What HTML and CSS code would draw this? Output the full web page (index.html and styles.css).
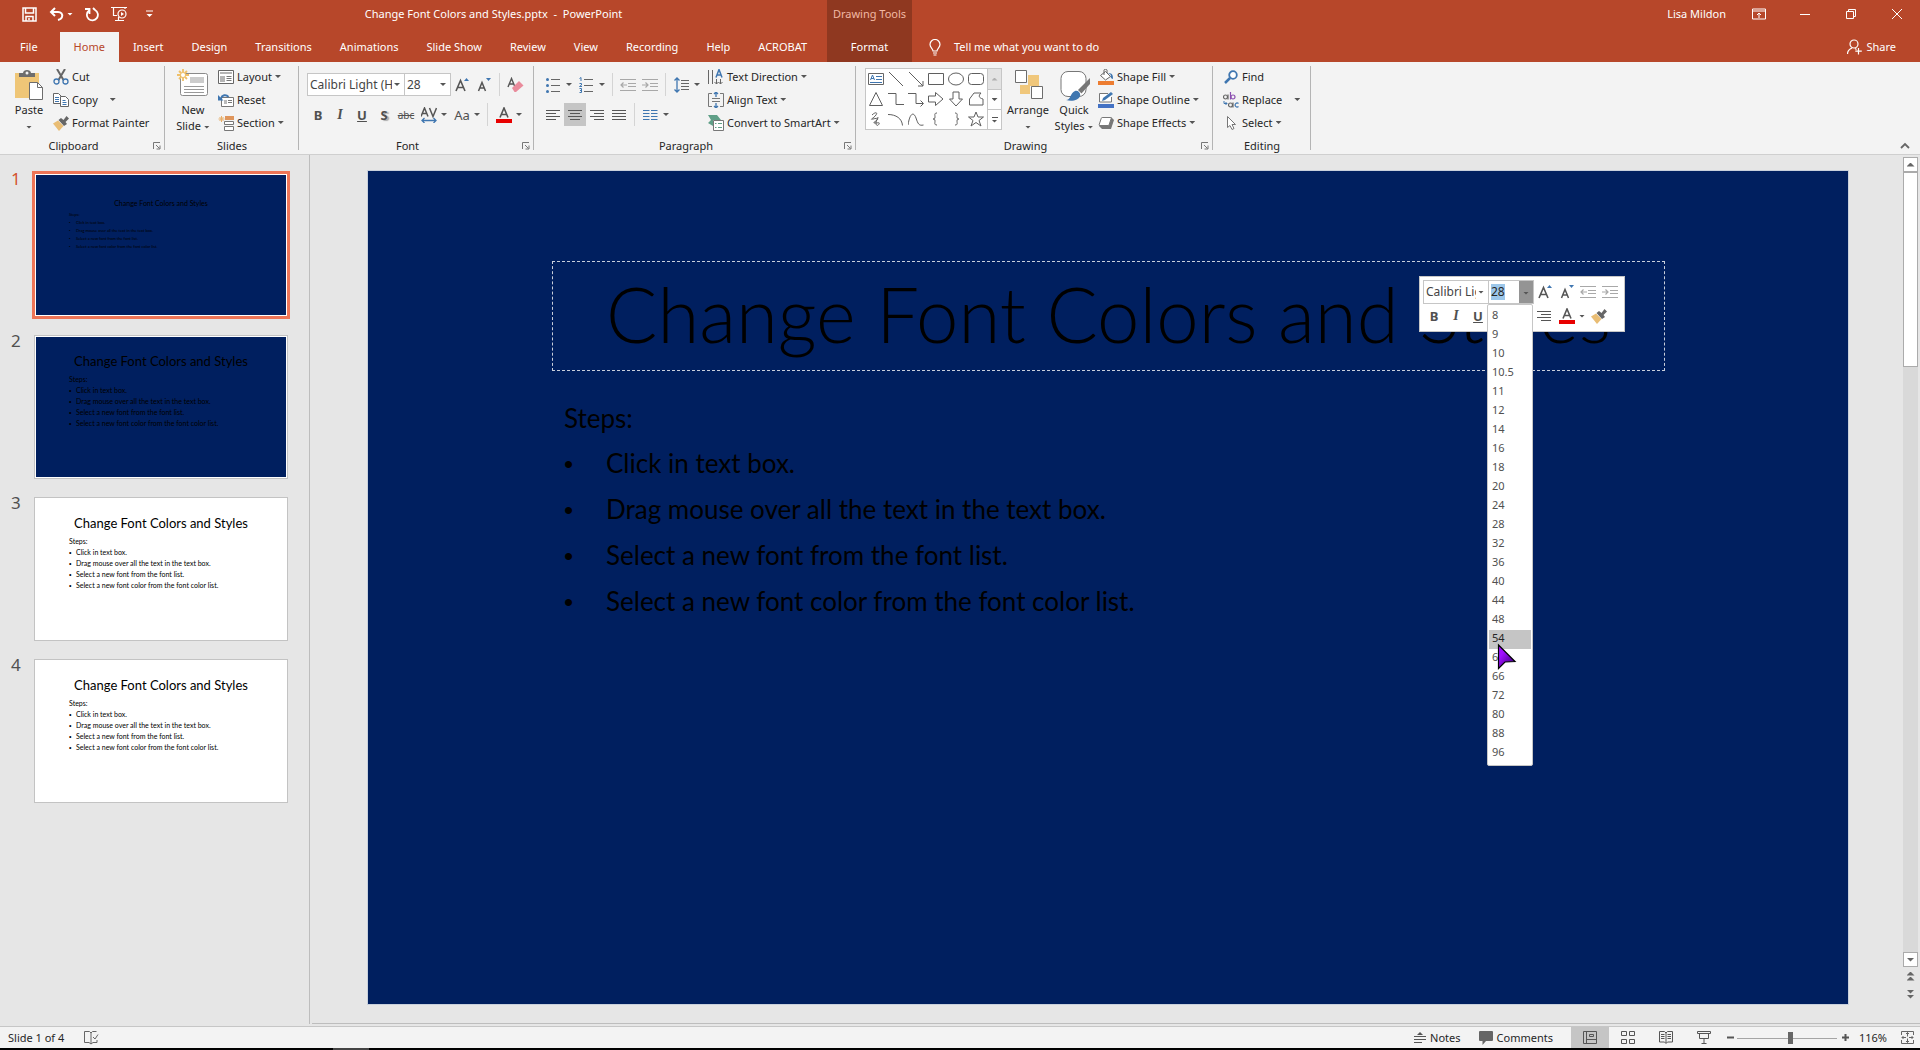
FILE: index.html
```html
<!DOCTYPE html>
<html lang="en">
<head>
<meta charset="utf-8">
<title>Change Font Colors and Styles.pptx - PowerPoint</title>
<link rel="stylesheet" href="styles.css">
</head>
<body>
<svg class="defs" aria-hidden="true">
  <symbol id="grow" viewBox="0 0 16 16"><path d="M2 14L6.500 3.500L11 14M3.700 10.500H9.300" fill="none" stroke="#555" stroke-width="1.600"/><path d="M10 4l2.500-3L15 4z" fill="#3f76b0"/></symbol>
  <symbol id="shrink" viewBox="0 0 16 16"><path d="M2.500 14L6 5.500L9.500 14M3.800 11H8.200" fill="none" stroke="#555" stroke-width="1.500"/><path d="M10 1l2.500 3L15 1z" fill="#3f76b0"/></symbol>
  <symbol id="outdent" viewBox="0 0 16 16"><path d="M0 2.500h16M8 6.500h8M8 9.500h8M0 13.500h16M1 8h6M3.500 5.500L1 8l2.500 2.500" fill="none" stroke="#a8a8a8" stroke-width="1.200"/></symbol>
  <symbol id="indent" viewBox="0 0 16 16"><path d="M0 2.500h16M8 6.500h8M8 9.500h8M0 13.500h16M0 8h6M3.500 5.500L6 8l-2.500 2.500" fill="none" stroke="#a8a8a8" stroke-width="1.200"/></symbol>
  <symbol id="alignright" viewBox="0 0 16 16"><path d="M1 3.500h14M5 6.500h10M1 9.500h14M5 12.500h10" stroke="#555"/></symbol>
  <symbol id="fontcolor" viewBox="0 0 16 16"><path d="M4 10.500L8 1L12 10.500M5.500 7.500h5" fill="none" stroke="#555" stroke-width="1.600"/><path d="M0 12h16v4H0z" fill="#e80000"/></symbol>
  <symbol id="painter" viewBox="0 0 16 16"><path d="M0 8.500l5-3 5.500 5.500L6 16z" fill="#e9bd74"/><path d="M5.500 5L8 3l2.500 2 3-4L16 3.500l-3.500 3.500L14 9l-3 2z" fill="#666"/></symbol>
  <symbol id="launcher" viewBox="0 0 8 8"><path d="M.5 7V.5H7M3 3l3.500 3.500M7 3.500V7H3.500" fill="none" stroke="#777"/></symbol>
</svg>

<header class="titlebar">
  <div class="bar-left">
    <div class="qat">
      <button aria-label="Save"><svg width="15" height="15" viewBox="0 0 15 15"><path d="M1 1h13v13H1zM3.500 1v5h8V1M4 14V9.500h7V14M6 12h2" fill="none" stroke="#fff" stroke-width="1.500"/></svg></button>
      <button aria-label="Undo"><svg width="15" height="14" viewBox="0 0 15 14"><path d="M6 1L2 5l4 4M2 5h7c3 0 5 2 4 5-.5 1.500-2 2.500-4 3" fill="none" stroke="#fff" stroke-width="2"/></svg><span class="caret"></span></button>
      <button aria-label="Redo"><svg width="14" height="15" viewBox="0 0 14 15"><path d="M4 3.500A5.500 5.500 0 1 0 10 3M4.500 7V2H0M10 3L8 1" fill="none" stroke="#fff" stroke-width="1.800"/></svg></button>
      <button aria-label="Start from beginning"><svg width="17" height="16" viewBox="0 0 17 16"><path d="M0 1.500h16M2.500 2v7.500H6M14 2v1M4 14.500h9M7.500 11v3" fill="none" stroke="#fff" stroke-width="1.200"/><circle cx="11" cy="8" r="4" fill="none" stroke="#fff" stroke-width="1.200"/><path d="M10 6v4l3-2z" fill="#fff"/></svg></button>
      <button class="qat-more" aria-label="Customize Quick Access Toolbar"><svg width="7" height="8" viewBox="0 0 7 8"><path d="M0 1h7" stroke="#fff"/><path d="M.5 4h6l-3 3z" fill="#fff"/></svg></button>
    </div>
    <h1 class="doc-title">Change Font Colors and Styles.pptx&nbsp; -&nbsp; PowerPoint</h1>
  </div>
  <nav class="tabs" aria-label="Ribbon tabs">
    <button class="tab tab-file">File</button>
    <button class="tab tab-active">Home</button>
    <button class="tab">Insert</button>
    <button class="tab">Design</button>
    <button class="tab">Transitions</button>
    <button class="tab">Animations</button>
    <button class="tab">Slide Show</button>
    <button class="tab">Review</button>
    <button class="tab">View</button>
    <button class="tab">Recording</button>
    <button class="tab">Help</button>
    <button class="tab">ACROBAT</button>
  </nav>
  <div class="context">
    <span class="context-name">Drawing Tools</span>
    <button class="tab">Format</button>
  </div>
  <div class="window-controls">
    <span class="user">Lisa Mildon</span>
    <button aria-label="Ribbon display options"><svg width="14" height="12" viewBox="0 0 14 12"><path d="M.5 1h13v10H.5zM.5 3h13M7 10V5M5 7l2-2 2 2" fill="none" stroke="#fff"/></svg></button>
    <button aria-label="Minimize"><svg width="10" height="10" viewBox="0 0 10 10"><path d="M0 5.500h10" stroke="#fff"/></svg></button>
    <button aria-label="Restore"><svg width="10" height="10" viewBox="0 0 10 10"><path d="M.5 2.500h7v7h-7zM2.500 2.500v-2h7v7h-2" fill="none" stroke="#fff"/></svg></button>
    <button aria-label="Close"><svg width="10" height="10" viewBox="0 0 10 10"><path d="M0 0l10 10M10 0L0 10" stroke="#fff"/></svg></button>
  </div>
  <div class="tell-row">
    <button class="tell"><svg width="12" height="17" viewBox="0 0 12 17"><path d="M4 12c0-2-3-3.500-3-6.500a5 5 0 0 1 10 0c0 3-3 4.500-3 6.500zM4 14h4M4.500 16h3" fill="none" stroke="#fff" stroke-width="1.200"/></svg>Tell me what you want to do</button>
    <button class="share"><svg width="15" height="16" viewBox="0 0 15 16"><circle cx="7" cy="5" r="4" fill="none" stroke="#fff" stroke-width="1.200"/><path d="M.5 15c0-3 2-5 4.500-6M11.500 9v6.500M8.300 12.200h6.500M8 9.500l1.500 1" fill="none" stroke="#fff" stroke-width="1.200"/></svg>Share</button>
  </div>
</header>

<section class="ribbon" aria-label="Home ribbon">
  <section class="group group-clipboard">
    <div class="group-body">
      <button class="big"><svg width="32" height="32" viewBox="0 0 32 32"><path d="M2 4h24v25H2z" fill="#efc677"/><path d="M6 8V4h4c0-4 8-4 8 0h4v4z" fill="#6d6d6d"/><circle cx="14" cy="4" r="1.500" fill="#f3f3f3"/><path d="M16.500 13.500h8l5 5v12h-13z" fill="#fff" stroke="#6d6d6d"/><path d="M24.500 13.500v5h5" fill="none" stroke="#6d6d6d"/></svg><span>Paste</span><span><i class="caret"></i></span></button>
      <div class="stack">
        <button class="cmd"><svg width="16" height="16" viewBox="0 0 16 16"><path d="M4 0l6.500 11M12 0L5.500 11" stroke="#666" stroke-width="2"/><circle cx="3.500" cy="12.500" r="2.500" fill="none" stroke="#3f76b0" stroke-width="1.300"/><circle cx="12.500" cy="12.500" r="2.500" fill="none" stroke="#3f76b0" stroke-width="1.300"/></svg>Cut</button>
        <button class="cmd cmd-split"><svg width="16" height="16" viewBox="0 0 16 16"><path d="M.5 1.500h5l3 3v7h-8z" fill="#fff" stroke="#666"/><path d="M7.500 4.500h5l3 3v7h-8z" fill="#fff" stroke="#666"/><path d="M2 5.500h4M2 7.500h4M2 9.500h4M9.500 8.500h3M9.500 10.500h4M9.500 12.500h4" stroke="#3f76b0"/></svg>Copy<span class="caret"></span></button>
        <button class="cmd"><svg width="16" height="16"><use href="#painter"/></svg>Format Painter</button>
      </div>
    </div>
    <footer><h2>Clipboard</h2><button aria-label="Clipboard options"><svg width="8" height="8"><use href="#launcher"/></svg></button></footer>
  </section>

  <section class="group group-slides">
    <div class="group-body">
      <button class="big"><svg width="32" height="32" viewBox="0 0 32 32"><rect x="3.500" y="4.500" width="27" height="22" rx="2" fill="#fff" stroke="#8a8a8a"/><path d="M13 8h14v6H13z" fill="#ccc"/><path d="M7 17.500h20M7 20.500h20M7 23.500h20" stroke="#999"/><path d="M6 0v12M0 6h12M2 2l8 8M10 2l-8 8" stroke="#efc06a" stroke-width="1.800"/><circle cx="6" cy="6" r="2" fill="#fff"/></svg><span>New</span><span>Slide <i class="caret"></i></span></button>
      <div class="stack">
        <button class="cmd"><svg width="16" height="16" viewBox="0 0 16 16"><path d="M.5 1.500h15v13H.5z" fill="#fff" stroke="#666"/><path d="M2 3h12v2H2zM2 7h5v6H2z" fill="#b5b5b5"/><path d="M8.500 7.500h5M8.500 9.500h5M8.500 11.500h5" stroke="#777"/></svg>Layout<span class="caret"></span></button>
        <button class="cmd"><svg width="16" height="16" viewBox="0 0 16 16"><path d="M3.500 5.500h12v9h-12z" fill="#fff" stroke="#777"/><path d="M6 8h3v4H6z" fill="#bbb"/><path d="M10 8.500h4M10 10.500h4" stroke="#777"/><path d="M3 6.500C4 3 8 2 10.500 5" fill="none" stroke="#3f76b0" stroke-width="2"/><path d="M0 3v5.500h5.500z" fill="#3f76b0"/></svg>Reset</button>
        <button class="cmd"><svg width="16" height="16" viewBox="0 0 16 16"><path d="M7 2h9M7 4h9" stroke="#d9772a" stroke-width="1.500"/><path d="M6.500 6.500h9v3h-9zM6.500 11.500h9v4h-9z" fill="#fff" stroke="#777"/><path d="M3.500 1v6M.5 4h6M1.500 2l4 4M5.500 2l-4 4" stroke="#e8b06a"/></svg>Section<span class="caret"></span></button>
      </div>
    </div>
    <footer><h2>Slides</h2></footer>
  </section>

  <section class="group group-font">
    <div class="group-body rows">
      <div class="row">
        <span class="combo combo-font"><select aria-label="Font"><option>Calibri Light (Headings)</option></select><i class="caret"></i></span>
        <span class="combo combo-size"><select aria-label="Font size"><option>28</option></select><i class="caret"></i></span>
        <button class="tool" aria-label="Increase font size"><svg width="16" height="16"><use href="#grow"/></svg></button>
        <button class="tool" aria-label="Decrease font size"><svg width="16" height="16"><use href="#shrink"/></svg></button>
        <i class="sep"></i>
        <button class="tool" aria-label="Clear formatting"><svg width="17" height="16" viewBox="0 0 17 16"><path d="M1 10L4.500 1.500L8 10M2.300 7h4.400" fill="none" stroke="#555" stroke-width="1.400"/><path d="M5 11l7-7 4.500 4.500L9 15H7.500z" fill="#e98b9b"/></svg></button>
      </div>
      <div class="row">
        <button class="tool glyph"><b>B</b></button>
        <button class="tool glyph"><em>I</em></button>
        <button class="tool glyph"><u>U</u></button>
        <button class="tool glyph"><b class="shadow">S</b></button>
        <button class="tool glyph glyph-small"><s>abc</s></button>
        <button class="split" aria-label="Character spacing"><svg width="16" height="16" viewBox="0 0 16 16"><path d="M0 9.500L3.500 1L7 9.500M1.300 6.500h4.400M8.500 1L12 9.500L15.500 1" fill="none" stroke="#555" stroke-width="1.500"/><path d="M1 13.500h14M3.500 11L1 13.500L3.500 16M12.500 11l2.500 2.500L12.500 16" fill="none" stroke="#3f76b0" stroke-width="1.300"/></svg><span class="caret"></span></button>
        <button class="split glyph"><span class="case">Aa</span><span class="caret"></span></button>
        <i class="sep"></i>
        <button class="split" aria-label="Font color"><svg width="16" height="16"><use href="#fontcolor"/></svg><span class="caret"></span></button>
      </div>
    </div>
    <footer><h2>Font</h2><button aria-label="Font options"><svg width="8" height="8"><use href="#launcher"/></svg></button></footer>
  </section>

  <section class="group group-paragraph">
    <div class="group-body">
      <div class="rows">
        <div class="row">
          <button class="split" aria-label="Bullets"><svg width="16" height="16" viewBox="0 0 16 16"><circle cx="1.500" cy="2.500" r="1.500" fill="#3f76b0"/><circle cx="1.500" cy="8.500" r="1.500" fill="#3f76b0"/><circle cx="1.500" cy="14.500" r="1.500" fill="#3f76b0"/><path d="M5 2.500h9M5 8.500h9M5 14.500h9" stroke="#666"/></svg><span class="caret"></span></button>
          <button class="split" aria-label="Numbering"><svg width="16" height="16" viewBox="0 0 16 16"><path d="M.5 1.500L2 .5V4M.5 6.500h2v1.500L.5 9.500h2.500M.5 11.500h2v4H.5M1 13.500h1.500" fill="none" stroke="#3f76b0"/><path d="M5 2.500h9M5 8.500h9M5 14.500h9" stroke="#666"/></svg><span class="caret"></span></button>
          <i class="sep"></i>
          <button class="tool" aria-label="Decrease list level"><svg width="16" height="16"><use href="#outdent"/></svg></button>
          <button class="tool" aria-label="Increase list level"><svg width="16" height="16"><use href="#indent"/></svg></button>
          <i class="sep"></i>
          <button class="split" aria-label="Line spacing"><svg width="16" height="16" viewBox="0 0 16 16"><path d="M3 1v14M.5 3.500L3 1l2.500 2.500M.5 12.500L3 15l2.500-2.500" fill="none" stroke="#3f76b0" stroke-width="1.300"/><path d="M7 3.500h8M7 6.500h8M7 9.500h8M7 12.500h8" stroke="#666"/></svg><span class="caret"></span></button>
        </div>
        <div class="row">
          <button class="tool" aria-label="Align left"><svg width="16" height="16" viewBox="0 0 16 16"><path d="M1 3.500h14M1 6.500h10M1 9.500h14M1 12.500h10" stroke="#555"/></svg></button>
          <button class="tool tool-on" aria-label="Center"><svg width="16" height="16" viewBox="0 0 16 16"><path d="M1 3.500h14M3 6.500h10M1 9.500h14M3 12.500h10" stroke="#555"/></svg></button>
          <button class="tool" aria-label="Align right"><svg width="16" height="16"><use href="#alignright"/></svg></button>
          <button class="tool" aria-label="Justify"><svg width="16" height="16" viewBox="0 0 16 16"><path d="M1 3.500h14M1 6.500h14M1 9.500h14M1 12.500h14" stroke="#555"/></svg></button>
          <i class="sep"></i>
          <button class="split" aria-label="Columns"><svg width="16" height="16" viewBox="0 0 16 16"><path d="M0 3.500h6.500M0 6.500h6.500M0 9.500h6.500M0 12.500h6.500M8 3.500h6.500M8 6.500h6.500M8 9.500h6.500M8 12.500h6.500" stroke="#3f76b0"/></svg><span class="caret"></span></button>
        </div>
      </div>
      <div class="stack">
        <button class="cmd"><svg width="16" height="16" viewBox="0 0 16 16"><path d="M.5 1v14M4.500 1v14M8.500 10v5M12.500 10v5" stroke="#666"/><path d="M8 8.500L11 .5L14 8.500M9 6h4" fill="none" stroke="#3f76b0" stroke-width="1.500"/><path d="M6.500 13l2 2 2-2M10.500 13l2 2 2-2" fill="none" stroke="#666"/></svg>Text Direction<span class="caret"></span></button>
        <button class="cmd"><svg width="16" height="16" viewBox="0 0 16 16"><path d="M4 1.500H.5v13H4M12 1.500h3.500v13H12M4 6.500h8M4 9.500h8" fill="none" stroke="#777"/><path d="M8 0v5M6 2l2-2 2 2M8 11v5M6 14l2 2 2-2" fill="none" stroke="#3f76b0" stroke-width="1.300"/></svg>Align Text<span class="caret"></span></button>
        <button class="cmd"><svg width="16" height="16" viewBox="0 0 16 16"><path d="M0 0h9l4 5H5v6L0 8l3-3z" fill="#5f9f87"/><path d="M5.500 5.500h10v10h-10z" fill="#fff" stroke="#777"/><path d="M7 8.500h1.500M10 8.500h4M7 12.500h1.500M10 12.500h4" stroke="#5f9f87"/></svg>Convert to SmartArt<span class="caret"></span></button>
      </div>
    </div>
    <footer><h2>Paragraph</h2><button aria-label="Paragraph options"><svg width="8" height="8"><use href="#launcher"/></svg></button></footer>
  </section>

  <section class="group group-drawing">
    <div class="group-body">
      <div class="gallery">
        <div class="shapes">
          <button aria-label="Text box"><svg width="16" height="16" viewBox="0 0 16 16"><path d="M.5 2.500h15v11H.5z" fill="#fff" stroke="#666"/><path d="M2.500 9L4.500 4L6.500 9M3 7.500h3M8 5.500h6M8 8.500h6M2 11.500h12" fill="none" stroke="#3f76b0"/></svg></button>
          <button aria-label="Line"><svg class="s" width="16" height="16" viewBox="0 0 16 16"><path d="M1 1l14 14"/></svg></button>
          <button aria-label="Arrow"><svg class="s" width="16" height="16" viewBox="0 0 16 16"><path d="M1 1l14 14M15 10v5h-5"/></svg></button>
          <button aria-label="Rectangle"><svg class="s" width="16" height="16" viewBox="0 0 16 16"><path d="M.5 2.500h15v11H.5z"/></svg></button>
          <button aria-label="Oval"><svg class="s" width="16" height="16" viewBox="0 0 16 16"><ellipse cx="8" cy="8" rx="7.500" ry="6"/></svg></button>
          <button aria-label="Rounded rectangle"><svg class="s" width="16" height="16" viewBox="0 0 16 16"><rect x=".5" y="2.500" width="15" height="11" rx="3"/></svg></button>
          <button aria-label="Triangle"><svg class="s" width="16" height="16" viewBox="0 0 16 16"><path d="M8 1.500l6.500 13h-13z"/></svg></button>
          <button aria-label="Elbow connector"><svg class="s" width="16" height="16" viewBox="0 0 16 16"><path d="M0 2.500h8v11h8"/></svg></button>
          <button aria-label="Elbow arrow"><svg class="s" width="16" height="16" viewBox="0 0 16 16"><path d="M0 2.500h8v10h7M12.500 9.500l3 3-3 3"/></svg></button>
          <button aria-label="Right arrow"><svg class="s" width="16" height="16" viewBox="0 0 16 16"><path d="M.5 5h7V1.500L15 8l-7.500 6.500V11h-7z"/></svg></button>
          <button aria-label="Down arrow"><svg class="s" width="16" height="16" viewBox="0 0 16 16"><path d="M5 1v7H1.500L8 15l6.500-7H11V1z"/></svg></button>
          <button aria-label="Freeform"><svg class="s" width="16" height="16" viewBox="0 0 16 16"><path d="M1.500 14V8L6 2h7c-3 3-2 5 2 6v6z"/></svg></button>
          <button aria-label="Scribble"><svg class="s" width="16" height="16" viewBox="0 0 16 16"><path d="M4 4c3-3 6-3 4 0s-7 5-3 4 6-1 4 1-5 3-2 3 5-1 4 1-3 2-3-1 2-4 2-6"/></svg></button>
          <button aria-label="Arc"><svg class="s" width="16" height="16" viewBox="0 0 16 16"><path d="M0 3.500c8 0 14 4 14.500 11"/></svg></button>
          <button aria-label="Curve"><svg class="s" width="16" height="16" viewBox="0 0 16 16"><path d="M0 14C2 1 6 1 8 7s3 8 7.500 7"/></svg></button>
          <button aria-label="Left brace"><svg class="s" width="16" height="16" viewBox="0 0 16 16"><path d="M9 2C6 2 7 4 7 6S6 8 5 8c1 0 2 0 2 2s-1 4 2 4"/></svg></button>
          <button aria-label="Right brace"><svg class="s" width="16" height="16" viewBox="0 0 16 16"><path d="M7 2c3 0 2 2 2 4s1 2 2 2c-1 0-2 0-2 2s1 4-2 4"/></svg></button>
          <button aria-label="Star"><svg class="s" width="16" height="16" viewBox="0 0 16 16"><path d="M8 1l2 5h5.500L11 9.500l2 5.500-5-3.500L3 15l2-5.500L.5 6H6z"/></svg></button>
        </div>
        <div class="gallery-scroll">
          <button disabled aria-label="Scroll up"><i class="caret caret-up"></i></button>
          <button aria-label="Scroll down"><i class="caret"></i></button>
          <button aria-label="More shapes"><i class="bar"></i><i class="caret"></i></button>
        </div>
      </div>
      <button class="big big-arrange"><svg width="32" height="32" viewBox="0 0 32 32"><path d="M16 6h11v11H16zM8 16h10v9H8z" fill="#f0c77b"/><path d="M3.500 1.500h11v12h-11zM19.500 17.500h11v12h-11z" fill="#fff" stroke="#6d6d6d"/></svg><span>Arrange</span><span><i class="caret"></i></span></button>
      <button class="big big-styles"><svg width="32" height="32" viewBox="0 0 32 32"><rect x="3" y="2.500" width="25" height="25" rx="7" fill="#fff" stroke="#777"/><path d="M32 9L20 21l3.500 3.500L32 15z" fill="#777"/><path d="M8 31c5 0 4-7 9-9 3-1 6 2 5 5-1 4-8 6-14 4z" fill="#3f76b0"/></svg><span>Quick</span><span>Styles <i class="caret"></i></span></button>
      <div class="stack">
        <button class="cmd"><svg width="16" height="16" viewBox="0 0 16 16"><path d="M2.500 6.500l5-4 5 5-5 3.500z" fill="#fff" stroke="#666"/><path d="M6 6V1c0-1 3-1 3 0v3" fill="none" stroke="#666"/><path d="M10 4c5 0 5 3 5 6-2 0-3-3-2-4z" fill="#3f76b0"/><path d="M0 12h16v4H0z" fill="#ed7d31"/></svg>Shape Fill<span class="caret"></span></button>
        <button class="cmd"><svg width="16" height="16" viewBox="0 0 16 16"><path d="M13.500 5v5H1.500V1.500H10" fill="#fff" stroke="#777"/><path d="M4 9l1-3L13 0l2 2-8 6z" fill="#3f76b0"/><path d="M0 12h16v4H0z" fill="#4472c4"/></svg>Shape Outline<span class="caret"></span></button>
        <button class="cmd"><svg width="16" height="16" viewBox="0 0 16 16"><path d="M4 2h9l3 3-3 9H4l-3-3z" fill="#777"/><path d="M4.500 2.500h8q1 0 .7 1l-2 6q-.3 1-1.200 1H2q-1 0-.8-1l2-6q.3-1 1.300-1z" fill="#fff" stroke="#777"/></svg>Shape Effects<span class="caret"></span></button>
      </div>
    </div>
    <footer><h2>Drawing</h2><button aria-label="Drawing options"><svg width="8" height="8"><use href="#launcher"/></svg></button></footer>
  </section>

  <section class="group group-editing">
    <div class="group-body">
      <div class="stack">
        <button class="cmd"><svg width="16" height="16" viewBox="0 0 16 16"><circle cx="10" cy="6" r="3.800" fill="#fff" stroke="#3f76b0" stroke-width="1.800"/><path d="M7 9l-5 5" stroke="#3f76b0" stroke-width="2.500"/></svg>Find</button>
        <button class="cmd cmd-split"><svg width="16" height="16" viewBox="0 0 16 16"><circle cx="2.500" cy="5" r="2" fill="none" stroke="#666" stroke-width="1.200"/><path d="M5 2.500v5" stroke="#666" stroke-width="1.200"/><path d="M7.500 0v7.500" stroke="#8b4fb0" stroke-width="1.200"/><circle cx="10" cy="5" r="2" fill="none" stroke="#8b4fb0" stroke-width="1.200"/><circle cx="7.500" cy="13" r="2" fill="none" stroke="#666" stroke-width="1.200"/><path d="M10 10.500v5" stroke="#666" stroke-width="1.200"/><path d="M15.500 11.500a2 2 0 1 0 0 3" fill="none" stroke="#3f76b0" stroke-width="1.200"/><path d="M1 9v2.500h3M2.500 10L4 11.500 2.500 13" fill="none" stroke="#3f76b0"/></svg>Replace<span class="caret"></span></button>
        <button class="cmd"><svg width="16" height="16" viewBox="0 0 16 16"><path d="M4.500 1.500v11l2.500-2 2 4 2-1-2-4h3.500z" fill="#fff" stroke="#777"/></svg>Select<span class="caret"></span></button>
      </div>
    </div>
    <footer><h2>Editing</h2></footer>
  </section>
  <button class="collapse" aria-label="Collapse the ribbon"><svg width="10" height="7" viewBox="0 0 10 7"><path d="M1 6l4-4 4 4" fill="none" stroke="#666" stroke-width="1.800"/></svg></button>
</section>

<main class="workspace">
  <ol class="thumbs">
    <li class="current"><span class="num">1</span>
      <div class="thumb navy small"><h3>Change Font Colors and Styles</h3><p>Steps:</p><ul><li>Click in text box.</li><li>Drag mouse over all the text in the text box.</li><li>Select a new font from the font list.</li><li>Select a new font color from the font color list.</li></ul></div></li>
    <li><span class="num">2</span>
      <div class="thumb navy"><h3>Change Font Colors and Styles</h3><p>Steps:</p><ul><li>Click in text box.</li><li>Drag mouse over all the text in the text box.</li><li>Select a new font from the font list.</li><li>Select a new font color from the font color list.</li></ul></div></li>
    <li><span class="num">3</span>
      <div class="thumb"><h3>Change Font Colors and Styles</h3><p>Steps:</p><ul><li>Click in text box.</li><li>Drag mouse over all the text in the text box.</li><li>Select a new font from the font list.</li><li>Select a new font color from the font color list.</li></ul></div></li>
    <li><span class="num">4</span>
      <div class="thumb"><h3>Change Font Colors and Styles</h3><p>Steps:</p><ul><li>Click in text box.</li><li>Drag mouse over all the text in the text box.</li><li>Select a new font from the font list.</li><li>Select a new font color from the font color list.</li></ul></div></li>
  </ol>

  <div class="editor">
    <div class="stage">
      <article class="slide">
        <h2 class="slide-title">Change Font Colors and Styles</h2>
        <div class="slide-body">
          <p>Steps:</p>
          <ul>
            <li>Click in text box.</li>
            <li>Drag mouse over all the text in the text box.</li>
            <li>Select a new font from the font list.</li>
            <li>Select a new font color from the font color list.</li>
          </ul>
        </div>

        <div class="mini">
          <div class="row">
            <span class="combo mini-font"><select aria-label="Font"><option>Calibri Light</option></select><i class="caret"></i></span>
            <span class="combo mini-size"><input type="text" value="28" aria-label="Font size"><button aria-label="Open size list"><i class="caret"></i></button></span>
            <button class="tool" aria-label="Increase font size"><svg width="16" height="16"><use href="#grow"/></svg></button>
            <button class="tool" aria-label="Decrease font size"><svg width="16" height="16"><use href="#shrink"/></svg></button>
            <button class="tool" aria-label="Decrease list level"><svg width="16" height="16"><use href="#outdent"/></svg></button>
            <button class="tool" aria-label="Increase list level"><svg width="16" height="16"><use href="#indent"/></svg></button>
          </div>
          <div class="row row-format">
            <button class="tool glyph"><b>B</b></button>
            <button class="tool glyph"><em>I</em></button>
            <button class="tool glyph"><u>U</u></button>
            <span class="under-list"></span>
            <button class="tool" aria-label="Align right"><svg width="16" height="16"><use href="#alignright"/></svg></button>
            <button class="split" aria-label="Font color"><svg width="16" height="16"><use href="#fontcolor"/></svg><span class="caret"></span></button>
            <button class="tool" aria-label="Format painter"><svg width="16" height="16"><use href="#painter"/></svg></button>
          </div>
          <select class="sizes" size="24" aria-label="Font sizes">
            <option>8</option><option>9</option><option>10</option><option>10.5</option><option>11</option><option>12</option><option>14</option><option>16</option><option>18</option><option>20</option><option>24</option><option>28</option><option>32</option><option>36</option><option>40</option><option>44</option><option>48</option><option class="hover">54</option><option>60</option><option>66</option><option>72</option><option>80</option><option>88</option><option>96</option>
          </select>
          <svg class="pointer" width="20" height="28" viewBox="0 0 20 28"><defs><linearGradient id="pg" x1="0" y1="0" x2="1" y2="1"><stop offset=".3" stop-color="#a010ff"/><stop offset=".8" stop-color="#4a0090"/></linearGradient></defs><path d="M1.500 2L18 18.500L8 19L1.500 25.500z" fill="url(#pg)" stroke="#000" stroke-width="1.200"/></svg>
        </div>
      </article>
    </div>
    <div class="vscroll">
      <button class="arrow" aria-label="Scroll up"><i class="caret caret-up"></i></button>
      <div class="track"><div class="knob"></div></div>
      <button class="arrow" aria-label="Scroll down"><i class="caret"></i></button>
      <button class="jump" aria-label="Previous slide"><i class="caret caret-up"></i><i class="caret caret-up"></i></button>
      <button class="jump" aria-label="Next slide"><i class="caret"></i><i class="caret"></i></button>
    </div>
  </div>
</main>

<footer class="status">
  <span class="slide-count">Slide 1 of 4</span>
  <button aria-label="Spelling"><svg width="15" height="14" viewBox="0 0 15 14"><path d="M7 2L5.500.5H.5v11H5L7 13l2-1.500h4V9M7 2v11M7 2L8.500.5h4M9 6l2 2 3-4.500" fill="none" stroke="#666"/></svg></button>
  <div class="status-right">
    <button class="status-btn"><svg width="12" height="13" viewBox="0 0 12 13"><path d="M3 4l3-3 3 3z" fill="#555"/><path d="M0 5.500h12M0 8.500h12M0 11.500h8" stroke="#555"/></svg>Notes</button>
    <button class="status-btn"><svg width="14" height="14" viewBox="0 0 14 14"><path d="M1 0h12q1 0 1 1v8q0 1-1 1H7l-3.500 4V10H1q-1 0-1-1V1q0-1 1-1z" fill="#666"/></svg>Comments</button>
    <button class="view view-on" aria-label="Normal"><svg width="14" height="13" viewBox="0 0 14 13"><path d="M.5.5h13v12H.5zM3.500.5v12M3.500 8.500h10M6.500 3.500h4v2h-4z" fill="none" stroke="#555"/></svg></button>
    <button class="view" aria-label="Slide sorter"><svg width="14" height="13" viewBox="0 0 14 13"><path d="M.5.500h5v4h-5zM8.500.500h5v4h-5zM.5 8.500h5v4h-5zM8.500 8.500h5v4h-5z" fill="none" stroke="#555"/></svg></button>
    <button class="view" aria-label="Reading view"><svg width="14" height="13" viewBox="0 0 14 13"><path d="M7 2L5.500.500H.5v10.500h5L7 12.500 8.500 11h5V.500h-5zM7 2v10M2 3.500h3.500M2 5.500h3.500M2 7.500h3.500M8.500 3.500h3.500M8.500 5.500h3.500M8.500 7.500h3.500" fill="none" stroke="#555"/></svg></button>
    <button class="view" aria-label="Slide show"><svg width="14" height="13" viewBox="0 0 14 13"><path d="M.5.500h13v2H.5zM2.500 3v4.500h9V3M7 7.500v5M4.500 12.500h5" fill="none" stroke="#555"/></svg></button>
    <button class="zoom-step" aria-label="Zoom out"><svg width="7" height="7" viewBox="0 0 7 7"><path d="M0 3.500h7" stroke="#555" stroke-width="2"/></svg></button>
    <input class="zoom" type="range" min="0" max="100" value="54" aria-label="Zoom">
    <button class="zoom-step" aria-label="Zoom in"><svg width="7" height="7" viewBox="0 0 7 7"><path d="M0 3.500h7M3.500 0v7" stroke="#555" stroke-width="2"/></svg></button>
    <button class="zoom-value">116%</button>
    <button class="fit" aria-label="Fit slide to window"><svg width="13" height="13" viewBox="0 0 13 13"><path d="M.5 4V.500h12V4M.5 9v3.500h12V9M6.500 1.500v4M5 3l1.500-1.500L8 3M6.500 11.500v-4M5 10l1.500 1.500L8 10M1 6.500h4M2.500 5L1 6.500 2.500 8M12 6.500H8M10.500 5L12 6.500 10.500 8" fill="none" stroke="#666"/></svg></button>
  </div>
</footer>
<div class="taskbar"><i></i></div>
</body>
</html>
```
FILE: styles.css
```css
* { box-sizing: border-box; }
html, body { height: 100%; }
body {
  margin: 0;
  display: flex;
  flex-direction: column;
  overflow: hidden;
  background: #e6e6e6;
  color: #262626;
  font: 11px/16px "Noto Sans", "Open Sans", sans-serif;
}
button, select, input { font: inherit; color: inherit; }
button { background: none; border: 0; padding: 0; margin: 0; white-space: nowrap; }
h1, h2, h3, p, ul, ol { margin: 0; padding: 0; font-weight: 400; font-size: inherit; list-style: none; }
svg { flex: none; display: block; }
.defs { position: absolute; width: 0; height: 0; }

.caret {
  display: inline-block;
  flex: none;
  width: 6px;
  height: 3px;
  background: #555;
  clip-path: polygon(0 0, 100% 0, 50% 100%);
}
.caret-up { clip-path: polygon(50% 0, 100% 100%, 0 100%); }

/* Title bar and tabs */
.titlebar {
  flex: none;
  display: grid;
  grid-template-columns: 827px 85px 1fr;
  grid-template-rows: 32px 30px;
  background: #b7472a;
  color: #fff;
}
.titlebar .caret { background: #fff; }
.bar-left { grid-area: 1 / 1; display: flex; align-items: center; padding-bottom: 4px; }
.qat { display: flex; align-items: center; width: 160px; padding-left: 22px; gap: 12px; }
.qat button { display: flex; align-items: center; gap: 3px; }
.qat .qat-more { margin-left: 6px; }
.doc-title { flex: 1; text-align: center; }
.tabs { grid-area: 2 / 1; display: flex; }
.tab { padding: 0 14px; }
.tab-file { padding: 0 20px; margin-right: 2px; }
.tab-active { background: #f3f3f3; color: #b7472a; }
.context { grid-area: 1 / 2 / 3 / 3; background: #8f3820; display: grid; grid-template-rows: 28px 34px; }
.context-name { text-align: center; line-height: 28px; color: #f1b8a4; }
.context .tab { padding: 4px 0 0; }
.window-controls { grid-area: 1 / 3; display: flex; justify-content: flex-end; padding-bottom: 5px; }
.window-controls button { width: 46px; display: grid; place-items: center; }
.user { padding: 6px 10px 0 0; line-height: 16px; }
.tell-row { grid-area: 2 / 3; display: flex; justify-content: space-between; padding: 0 24px 0 17px; }
.tell, .share { display: flex; align-items: center; }
.tell { gap: 13px; }
.share { gap: 4px; }

/* Ribbon */
.ribbon { flex: none; display: flex; height: 93px; background: #f3f3f3; border-bottom: 1px solid #cfcfcf; }
.group {
  flex: none;
  display: flex;
  flex-direction: column;
  justify-content: space-between;
  background: linear-gradient(#b4b4b4, #b4b4b4) right 4px / 1px 84px no-repeat;
}
.group-body { display: flex; padding-top: 3px; }
.group footer { display: flex; align-items: center; height: 17px; }
.group h2 { flex: 1; text-align: center; }
.group footer button { width: 18px; padding-left: 6px; }
.group-clipboard { width: 165px; }
.group-slides { width: 134px; }
.group-font { width: 235px; }
.group-paragraph { width: 322px; }
.group-drawing { width: 357px; }
.group-editing { width: 98px; }
.group-clipboard .group-body { padding-left: 13px; gap: 8px; }
.group-slides .group-body { padding-left: 12px; gap: 9px; }
.group-editing .group-body { padding-left: 10px; }
.group-font .group-body { padding-top: 11px; padding-left: 8px; }
.group-paragraph .group-body { display: grid; grid-template-columns: 166px 1fr; padding-left: 8px; }
.group-paragraph .rows { padding-top: 8px; }

.stack { display: flex; flex-direction: column; align-items: flex-start; }
.cmd { display: flex; align-items: center; gap: 3px; height: 23px; }
.cmd-split .caret { margin-left: 9px; }
.big { display: flex; flex-direction: column; align-items: center; padding-top: 4px; width: 32px; }
.big svg { margin-bottom: 1px; }
.big span { height: 16px; }
.big .caret { vertical-align: middle; }
.big-arrange { width: 44px; margin-left: 4px; }
.big-styles { width: 48px; }

.rows { display: flex; flex-direction: column; gap: 7px; }
.row { display: flex; height: 23px; }
.tool { width: 22px; display: grid; place-items: center; }
.tool-on { background: #c5c5c5; }
.split { width: 33px; padding-left: 4px; display: flex; align-items: center; gap: 4px; }
.sep { width: 1px; margin: 0 4px; background: #d4d4d4; }
.glyph { font-size: 13px; color: #505050; }
.glyph-small { font-size: 10px; }
.glyph em { font-family: "Liberation Serif", serif; font-weight: 700; font-size: 14px; }
.glyph u { font-weight: 700; }
.shadow { text-shadow: 2px 1px 1px #aaa; }
.case { width: 16px; }

.combo { display: flex; align-items: center; gap: 2px; background: #fff; border: 1px solid #c6c6c6; padding-right: 4px; }
.combo select { flex: 1; min-width: 0; appearance: none; border: 0; padding: 0 0 0 2px; background: none; text-overflow: clip; color: #444; font-size: 12px; }
.combo-font { width: 98px; }
.combo-size { width: 47px; margin-left: -1px; }

.gallery { display: flex; width: 137px; height: 62px; margin: 3px 0 0 9px; border: 1px solid #c6c6c6; background: #fff; }
.shapes { flex: 1; display: grid; grid-template: repeat(3, 20px) / repeat(6, 20px); }
.shapes button { display: grid; place-items: center; }
.s { fill: none; stroke: #5f5f5f; stroke-width: 1; }
.gallery-scroll { width: 14px; display: grid; grid-template-rows: repeat(3, 1fr); border-left: 1px solid #c6c6c6; }
.gallery-scroll button { display: flex; flex-direction: column; align-items: center; justify-content: center; gap: 2px; }
.gallery-scroll button + button { border-top: 1px solid #c6c6c6; }
.gallery-scroll button:disabled { background: #e3e3e3; }
.gallery-scroll button:disabled .caret { background: #b0b0b0; }
.bar { width: 6px; height: 1px; background: #555; }
.collapse { margin-left: auto; align-self: flex-end; padding: 0 10px 5px; }

/* Slide list */
.workspace { flex: 1; min-height: 0; display: flex; padding-bottom: 2px; }
.thumbs { flex: none; width: 310px; padding: 18px 21px 0 0; display: flex; flex-direction: column; gap: 18px; border-right: 1px solid #bdbdbd; overflow: hidden; }
.thumbs > li { display: flex; justify-content: space-between; }
.num { padding-left: 11px; font-size: 17px; line-height: 12px; color: #505050; }
.current .num { color: #d35230; }
.thumb { width: 254px; height: 144px; background: #fff; border: 1px solid #c3c3c3; padding: 15px 34px 0; color: #000; font: 7px/11px Lato, sans-serif; }
.thumb h3 { font-size: 13px; line-height: 20px; text-align: center; margin-bottom: 3px; }
.thumb li::before, .slide-body li::before { content: "•"; display: inline-block; font-family: "Liberation Sans", sans-serif; }
.thumb li::before { width: 7px; }
.navy { background: #001f5f; border-color: #c3c3c3; box-shadow: inset 0 0 0 1px #fff; }
.small { padding-top: 24px; font-size: 4px; line-height: 8px; }
.small h3 { font-size: 7px; line-height: 10px; }
.current .thumb { border-color: #ed7557; outline: 2px solid #ed7557; }

/* Slide editor */
.editor { flex: 1; min-width: 0; margin-left: 2px; display: flex; border-bottom: 1px solid #bdbdbd; }
.stage { flex: 1; padding: 16px 55px 0 56px; }
.slide { position: relative; aspect-ratio: 1480 / 833; background: #001f5f; color: #000; padding: 90px 183px 0 184px; outline: 1px solid #c8d0dc; font: 26px/45px Lato, sans-serif; }
.slide-title { border: 1px dashed #c8cedb; height: 110px; font-size: 76px; font-weight: 300; line-height: 104px; text-align: center; }
.slide-body { padding: 25px 12px 0; }
.slide-body li::before { width: 42px; }

/* Floating toolbar over the slide */
.mini { position: absolute; left: 1051px; top: 105px; width: 206px; height: 56px; padding: 3px; background: #fff; border: 1px solid #c6c6c6; font: 11px/16px "Noto Sans", "Open Sans", sans-serif; color: #262626; }
.mini .row { height: 24px; }
.mini-font { width: 66px; }
.mini-size { width: 46px; margin-left: -1px; padding: 0; }
.mini-size input { flex: 1; min-width: 0; height: 16px; margin-left: 2px; padding: 0; border: 0; font-size: 12px; background: linear-gradient(#9cc7ea, #9cc7ea) 0 0 / 14px 16px no-repeat; }
.mini-size button { width: 14px; align-self: stretch; background: #949494; }
.mini-size .caret { vertical-align: middle; }
.mini .row-format { height: 24px; }
.under-list { width: 44px; }
.sizes { position: absolute; left: 67px; top: 27px; width: 46px; height: 462px; padding: 2px 1px; border: 1px solid #c6c6c6; background: #fff; color: #505050; font-size: 11px; overflow: hidden; }
.sizes option { height: 19px; min-height: 19px; line-height: 19px; padding: 0 3px; }
.sizes .hover { background: #c5c5c5; color: #262626; }
.pointer { position: absolute; left: 77px; top: 366px; }

/* Vertical scroll bar */
.vscroll { flex: none; width: 17px; padding: 2px 2px 0 0; display: flex; flex-direction: column; }
.arrow { height: 15px; display: grid; place-items: center; background: #fff; border: 1px solid #ababab; }
.track { flex: 1; background: #d9d9d9; }
.knob { height: 195px; background: #fff; border: 1px solid #ababab; }
.jump { height: 18px; display: flex; flex-direction: column; align-items: center; justify-content: center; gap: 1px; }
.jump:last-child { margin-bottom: 20px; }
.vscroll .caret { width: 8px; height: 4px; background: #666; }

/* Status bar */
.status { flex: none; display: flex; align-items: center; height: 22px; padding-left: 8px; line-height: 14px; background: #f3f3f3; border-top: 1px solid #c6c6c6; }
.slide-count { margin-right: 20px; }
.status-right { display: flex; align-items: center; align-self: stretch; margin-left: auto; padding-right: 6px; }
.status-btn { display: flex; align-items: center; gap: 4px; margin-right: 18px; }
.view { width: 38px; align-self: stretch; display: grid; place-items: center; }
.view-on { background: #c5c5c5; }
.zoom-step { margin-left: 4px; }
.zoom { appearance: none; width: 100px; height: 12px; margin: 0 1px 0 3px; background: linear-gradient(#a5a5a5, #a5a5a5) 0 6px / 100% 1px no-repeat; }
.zoom::-webkit-slider-thumb { appearance: none; width: 5px; height: 12px; background: #666; }
.zoom-value { width: 48px; }
.fit { margin-left: 4px; }
.taskbar { flex: none; height: 2px; background: #000; }
.taskbar i { display: block; width: 36px; height: 2px; margin-left: 333px; background: #444; }
```
